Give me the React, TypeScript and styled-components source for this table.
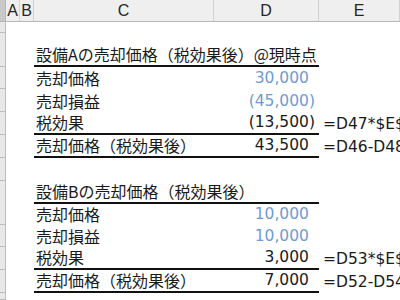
import React from "react";
import styled, { createGlobalStyle } from "styled-components";

const Global = createGlobalStyle`
  html, body { margin: 0; padding: 0; background: #fff; overflow: hidden; }
  body { width: 400px; height: 300px; }
`;

const COLS = "6px 14px 14px 180px 105px 1fr";

const Sheet = styled.div`
  width: 400px;
  height: 300px;
  overflow: hidden;
  display: flex;
  flex-direction: column;
  background: #fff;
`;

const HeaderRow = styled.div`
  display: grid;
  grid-template-columns: ${COLS};
  height: 22px;
  box-sizing: border-box;
  background: #efefef;
  border-bottom: 1px solid #b8b8b8;
  flex: none;
`;

const Corner = styled.div`
  background: #c9c9c9;
  border-right: 1px solid #b8b8b8;
`;

const ColHead = styled.div`
  display: flex;
  align-items: center;
  justify-content: center;
  border-right: 1px solid #d2d2d2;
  font-family: "Liberation Sans", Arial, sans-serif;
  font-size: 16px;
  color: #262626;
  overflow: hidden;
`;

const Row = styled.div<{ $h: number }>`
  display: grid;
  grid-template-columns: ${COLS};
  height: ${(p) => p.$h}px;
  flex: none;
`;

const RowHead = styled.div`
  background: #e8e8e8;
  border-right: 1px solid #bdbdbd;
  border-bottom: 1px solid #bdbdbd;
  box-sizing: border-box;
`;

const Cell = styled.div<{ $line?: boolean }>`
  display: flex;
  align-items: flex-end;
  box-sizing: border-box;
  padding-bottom: 1px;
  line-height: 20px;
  white-space: nowrap;
  border-bottom: ${(p) => (p.$line ? "2px solid #111" : "none")};
`;

const Label = styled(Cell)`
  padding-left: 2px;
  font-family: "Noto Sans CJK JP", "Noto Sans", sans-serif;
  font-size: 16px;
  color: #1a1a1a;
  overflow: visible;
  position: relative;
  z-index: 1;
`;

const Num = styled(Cell)<{ $blue?: boolean }>`
  justify-content: flex-end;
  padding-right: 4px;
  font-family: "DejaVu Sans", Verdana, sans-serif;
  font-size: 15.5px;
  color: ${(p) => (p.$blue ? "#6f9bd3" : "#1a1a1a")};
`;

const Ghost = styled.span`
  visibility: hidden;
`;

const Formula = styled(Cell)`
  padding-left: 4px;
  font-family: "DejaVu Sans", Verdana, sans-serif;
  font-size: 15.5px;
  color: #1a1a1a;
  overflow: hidden;
`;

type R = {
  h: number;
  label?: string;
  value?: string;
  neg?: boolean;
  blue?: boolean;
  formula?: string;
  line?: boolean;
};

const rows: R[] = [
  { h: 11 },
  { h: 34, label: "設備Aの売却価格（税効果後）@現時点", line: true },
  { h: 22, label: "売却価格", value: "30,000", blue: true },
  { h: 23, label: "売却損益", value: "45,000", neg: true, blue: true },
  { h: 23, label: "税効果", value: "13,500", neg: true, formula: "=D47*$E$5", line: true },
  { h: 23, label: "売却価格（税効果後）", value: "43,500", formula: "=D46-D48", line: true },
  { h: 23 },
  { h: 22, label: "設備Bの売却価格（税効果後）", line: true },
  { h: 22, label: "売却価格", value: "10,000", blue: true },
  { h: 22, label: "売却損益", value: "10,000", blue: true },
  { h: 23, label: "税効果", value: "3,000", formula: "=D53*$E$5", line: true },
  { h: 23, label: "売却価格（税効果後）", value: "7,000", formula: "=D52-D54", line: true },
  { h: 7 },
];

export default function App() {
  return (
    <>
      <Global />
      <Sheet>
        <HeaderRow>
          <Corner />
          <ColHead>A</ColHead>
          <ColHead>B</ColHead>
          <ColHead>C</ColHead>
          <ColHead>D</ColHead>
          <ColHead>E</ColHead>
        </HeaderRow>
        {rows.map((r, i) => (
          <Row key={i} $h={r.h}>
            <RowHead />
            <Cell />
            <Cell />
            <Label $line={r.line}>{r.label}</Label>
            <Num $line={r.line} $blue={r.blue}>
              {r.value
                ? r.neg
                  ? `(${r.value})`
                  : (
                    <>
                      {r.value}
                      <Ghost>)</Ghost>
                    </>
                  )
                : null}
            </Num>
            <Formula>{r.formula}</Formula>
          </Row>
        ))}
      </Sheet>
    </>
  );
}
